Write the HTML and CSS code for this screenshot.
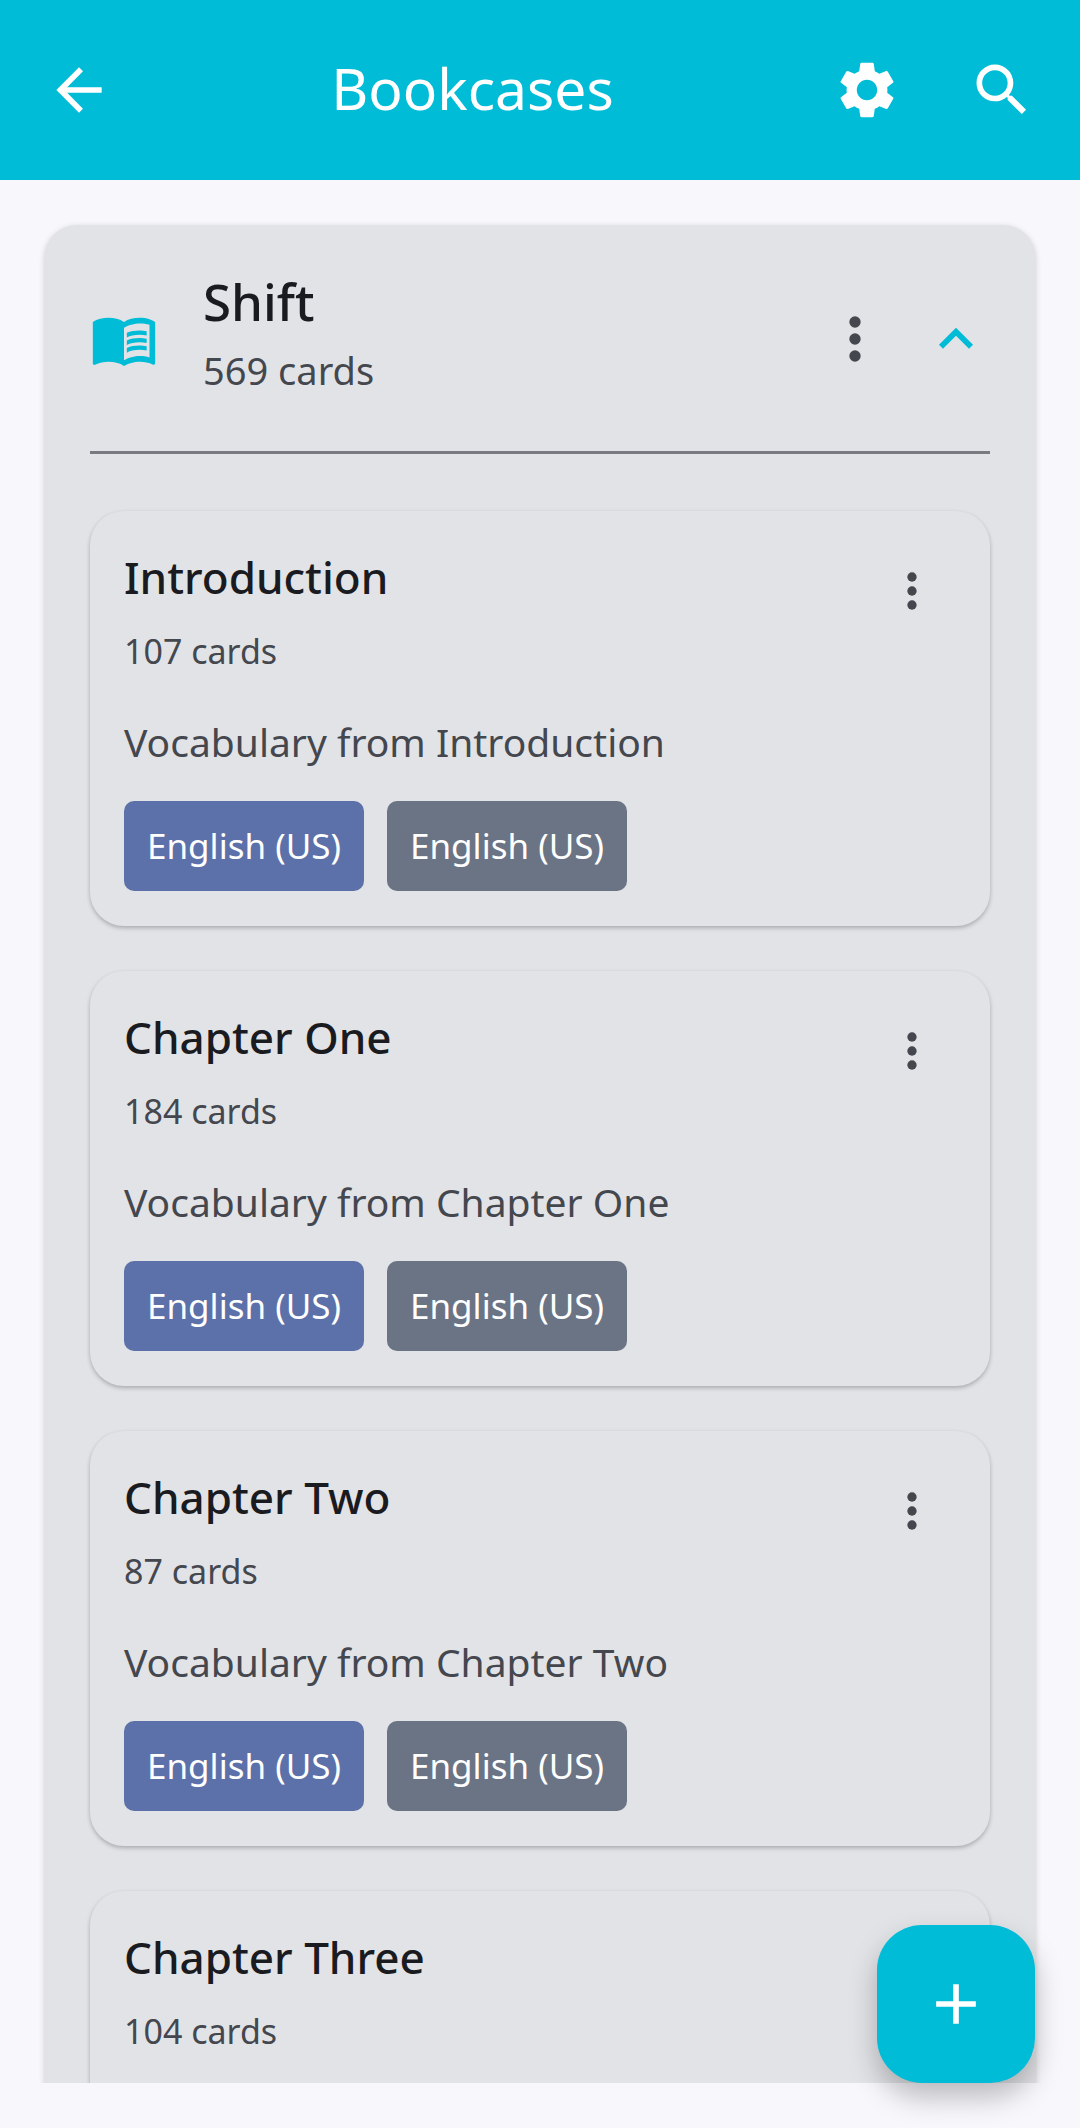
FILE: index.html
```html
<!DOCTYPE html>
<html lang="en">
<head>
  <meta charset="UTF-8">
  <title>Bookcases</title>
  <meta name="viewport" content="width=device-width, initial-scale=1.0">
  <link rel="stylesheet" href="styles.css">
</head>
<body>

<svg class="sprite" aria-hidden="true">
  <symbol id="more" viewBox="0 0 24 24">
    <circle cx="12" cy="6" r="2"/><circle cx="12" cy="12" r="2"/><circle cx="12" cy="18" r="2"/>
  </symbol>
</svg>

<header class="topbar">
  <button class="icon-btn" aria-label="Back">
    <svg class="icon" viewBox="0 0 24 24"><path d="M20 11H7.83l5.59-5.59L12 4l-8 8 8 8 1.41-1.41L7.83 13H20v-2z"/></svg>
  </button>
  <h1>Bookcases</h1>
  <button class="icon-btn" aria-label="Settings">
    <svg class="icon" viewBox="0 0 24 24"><path fill-rule="evenodd" d="M19.14 12.94c.04-.3.06-.61.06-.94 0-.32-.02-.64-.07-.94l2.03-1.58c.18-.14.23-.41.12-.61l-1.92-3.32c-.12-.22-.37-.29-.59-.22l-2.39.96c-.5-.38-1.03-.7-1.62-.94l-.36-2.54c-.04-.24-.24-.41-.48-.41h-3.84c-.24 0-.43.17-.47.41l-.36 2.54c-.59.24-1.13.57-1.62.94l-2.39-.96c-.22-.08-.47 0-.59.22L2.74 8.87c-.12.21-.08.47.12.61l2.03 1.58c-.05.3-.09.63-.09.94s.02.64.07.94l-2.03 1.58c-.18.14-.23.41-.12.61l1.92 3.32c.12.22.37.29.59.22l2.39-.96c.5.38 1.03.7 1.62.94l.36 2.54c.05.24.24.41.48.41h3.84c.24 0 .44-.17.47-.41l.36-2.54c.59-.24 1.13-.56 1.62-.94l2.39.96c.22.08.47 0 .59-.22l1.92-3.32c.12-.22.07-.47-.12-.61l-2.01-1.58zM12 15.6c-1.98 0-3.6-1.62-3.6-3.6s1.62-3.6 3.6-3.6 3.6 1.62 3.6 3.6-1.62 3.6-3.6 3.6z"/></svg>
  </button>
  <button class="icon-btn" aria-label="Search">
    <svg class="icon" viewBox="0 0 24 24"><path d="M15.5 14h-.79l-.28-.27C15.41 12.59 16 11.11 16 9.5 16 5.91 13.09 3 9.5 3S3 5.91 3 9.5 5.91 16 9.5 16c1.61 0 3.09-.59 4.23-1.57l.27.28v.79l5 4.99L20.49 19l-4.99-5zm-6 0C7.01 14 5 11.99 5 9.5S7.01 5 9.5 5 14 7.01 14 9.5 11.99 14 9.5 14z"/></svg>
  </button>
</header>

<main class="content">
  <section class="bookcase">
    <div class="bookcase-head">
      <svg class="icon accent" viewBox="0 0 24 24"><path d="M21 5c-1.11-.35-2.33-.5-3.5-.5-1.95 0-4.05.4-5.5 1.5-1.45-1.1-3.55-1.5-5.5-1.5S2.45 4.9 1 6v14.65c0 .25.25.5.5.5.1 0 .15-.05.25-.05C3.1 20.45 5.05 20 6.5 20c1.95 0 4.05.4 5.5 1.5 1.35-.85 3.8-1.5 5.5-1.5 1.65 0 3.35.3 4.75 1.05.1.05.15.05.25.05.25 0 .5-.25.5-.5V6c-.6-.45-1.25-.75-2-1zm0 13.5c-1.1-.35-2.3-.5-3.5-.5-1.7 0-4.15.65-5.5 1.5V8c1.35-.85 3.8-1.5 5.5-1.5 1.2 0 2.4.15 3.5.5v11.5z"/><path d="M17.5 10.5c.88 0 1.73.09 2.5.26V9.24c-.79-.15-1.64-.24-2.5-.24-1.7 0-3.24.29-4.5.83v1.66c1.13-.64 2.7-.99 4.5-.99zM13 12.49v1.66c1.13-.64 2.7-.99 4.5-.99.88 0 1.73.09 2.5.26V11.9c-.79-.15-1.64-.24-2.5-.24-1.7 0-3.24.3-4.5.83zM17.5 14.33c-1.7 0-3.24.29-4.5.83v1.66c1.13-.64 2.7-.99 4.5-.99.88 0 1.73.09 2.5.26v-1.52c-.79-.16-1.64-.24-2.5-.24z"/></svg>
      <div class="bookcase-title">
        <h2>Shift</h2>
        <p>569 cards</p>
      </div>
      <button class="icon-btn muted" aria-label="Bookcase options"><svg class="icon"><use href="#more"/></svg></button>
      <button class="toggle" aria-label="Collapse">
        <svg class="icon accent" viewBox="0 0 24 24"><path d="M12 8l-6 6 1.41 1.41L12 10.83l4.59 4.58L18 14z"/></svg>
      </button>
    </div>

    <div class="books">
      <article class="book">
        <div class="book-head">
          <div>
            <h3>Introduction</h3>
            <p class="count">107 cards</p>
          </div>
          <button class="more" aria-label="Introduction options"><svg class="icon small"><use href="#more"/></svg></button>
        </div>
        <p class="desc">Vocabulary from Introduction</p>
        <div class="tags"><span class="tag from">English (US)</span><span class="tag to">English (US)</span></div>
      </article>

      <article class="book">
        <div class="book-head">
          <div>
            <h3>Chapter One</h3>
            <p class="count">184 cards</p>
          </div>
          <button class="more" aria-label="Chapter One options"><svg class="icon small"><use href="#more"/></svg></button>
        </div>
        <p class="desc">Vocabulary from Chapter One</p>
        <div class="tags"><span class="tag from">English (US)</span><span class="tag to">English (US)</span></div>
      </article>

      <article class="book">
        <div class="book-head">
          <div>
            <h3>Chapter Two</h3>
            <p class="count">87 cards</p>
          </div>
          <button class="more" aria-label="Chapter Two options"><svg class="icon small"><use href="#more"/></svg></button>
        </div>
        <p class="desc">Vocabulary from Chapter Two</p>
        <div class="tags"><span class="tag from">English (US)</span><span class="tag to">English (US)</span></div>
      </article>

      <article class="book">
        <div class="book-head">
          <div>
            <h3>Chapter Three</h3>
            <p class="count">104 cards</p>
          </div>
        </div>
      </article>
    </div>
  </section>
</main>

<button class="fab" aria-label="Add">
  <svg class="icon" viewBox="0 0 24 24"><path d="M19 13h-6v6h-2v-6H5v-2h6V5h2v6h6v2z"/></svg>
</button>

</body>
</html>
```
FILE: styles.css
```css
* { box-sizing: border-box; }
body { margin: 0; height: 100vh; display: flex; flex-direction: column; background: #f8f7fc; color: #1a1b20; font-family: "Noto Sans", sans-serif; }
h1, h2, h3, p { margin: 0; font-weight: 400; }
button { padding: 0; border: none; background: none; color: inherit; font: inherit; cursor: pointer; display: flex; align-items: center; justify-content: center; flex-shrink: 0; }

.sprite { display: none; }
.icon { width: 68px; height: 68px; fill: currentColor; display: block; flex-shrink: 0; }
.icon.small { width: 56px; height: 56px; }
.accent { color: #00bcd7; }
.muted { color: #44474e; }
.icon-btn { width: 135px; height: 135px; }

.topbar { display: flex; align-items: center; flex-shrink: 0; height: 180px; padding: 0 11px; background: #00bcd7; color: white; }
.topbar h1 { flex: 1; padding-bottom: 4px; text-align: center; font-size: 57px; line-height: 72px; }

.content { flex: 1; min-height: 0; overflow-y: auto; scrollbar-width: none; margin-bottom: 45px; padding: 45px 45px 0; }
.bookcase { padding: 0 45px 45px; border-radius: 32px; background: #e2e3e7; box-shadow: 0 2px 6px rgba(0,0,0,0.2); }
.bookcase-head { display: flex; align-items: center; min-height: 229px; padding-top: 2px; border-bottom: 3px solid #7a7b82; }
.bookcase-title { flex: 1; padding: 0 0 14px 45px; }
.bookcase-title h2 { font-size: 51px; line-height: 76px; font-weight: 500; }
.bookcase-title p { font-size: 38px; line-height: 62px; color: #44474e; }

.books { display: flex; flex-direction: column; gap: 45px; padding-top: 57px; }
.book { min-height: 415px; padding: 34px; border-radius: 34px; background: #e2e3e7; box-shadow: 0 2px 4px rgba(0,0,0,0.25); }
.book-head { display: flex; justify-content: space-between; align-items: flex-start; }
.book h3 { font-size: 44px; line-height: 64px; font-weight: 500; }
.count { margin-top: 18px; font-size: 34px; line-height: 48px; color: #44474e; }
.more { width: 88px; height: 92px; color: #44474e; }
.desc { margin-top: 39px; font-size: 39px; line-height: 56px; color: #44474e; }
.tags { display: flex; gap: 23px; margin-top: 31px; }
.tag { padding: 0 23px; border-radius: 10px; font-size: 35px; line-height: 90px; color: white; }
.from { background: #5c71a9; }
.to { background: #6b7484; }

.fab { position: fixed; right: 45px; bottom: 45px; width: 158px; height: 158px; border-radius: 45px; background: #00bcd7; color: white; box-shadow: 0 14px 28px rgba(0,0,0,0.25); }
```
